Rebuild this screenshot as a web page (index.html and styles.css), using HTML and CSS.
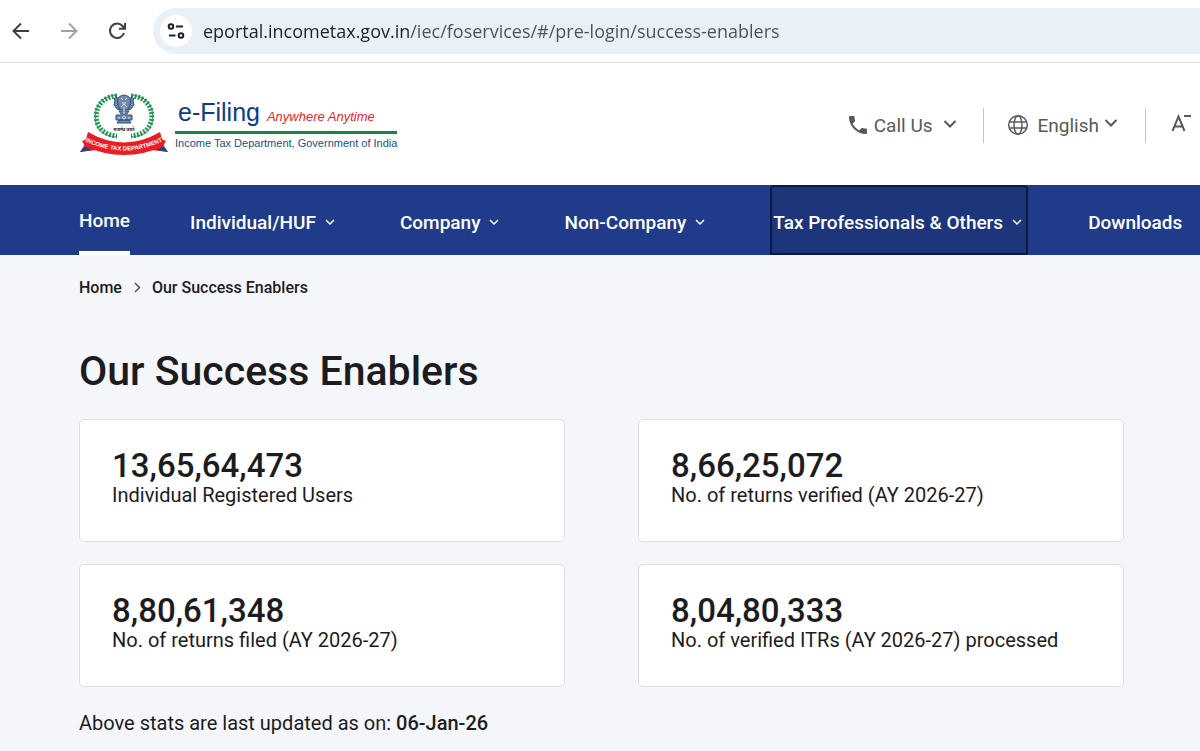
FILE: index.html
```html
<!doctype html>
<html lang="en">
<head>
    <meta charset="utf-8">
    <title>Our Success Enablers</title>
    <link rel="stylesheet" href="styles.css">
</head>
<body>
    <div class="browser-bar">
        <button class="browser-btn" type="button" aria-label="Back">
            <svg width="20" height="20" viewBox="0 0 20 20"><path d="M18 10H3M10 2.500L2.500 10L10 17.500"/></svg>
        </button>
        <button class="browser-btn disabled" type="button" aria-label="Forward" disabled>
            <svg width="20" height="20" viewBox="0 0 20 20"><path d="M2 10H17M10 2.500L17.500 10L10 17.500"/></svg>
        </button>
        <button class="browser-btn" type="button" aria-label="Reload">
            <svg width="20" height="20" viewBox="0 0 20 20"><path d="M17 12A7.200 7.200 0 1 1 15.500 5L17.500 7.200M18 2V7.700H12"/></svg>
        </button>
        <div class="address">
            <button class="site-info" type="button" aria-label="Site information">
                <svg width="20" height="20" viewBox="0 0 20 20"><circle cx="5" cy="5.500" r="2.300"/><path d="M10 5.500H17M3 14.500H9.500"/><circle cx="15" cy="14.500" r="2.300"/></svg>
            </button>
            <input class="url" type="text" aria-label="Address" value="eportal.incometax.gov.in/iec/foservices/#/pre-login/success-enablers">
        </div>
    </div>

    <header class="header">
        <a class="logo" href="#">
            <svg class="emblem" width="90" height="66" viewBox="0 0 90 66" role="img" aria-label="Income Tax Department">
                <!-- laurel -->
                <g fill="none" stroke="#2a9b5c" stroke-width="1">
                    <path d="M38 3C20 4 14 18 17 31C20 41 27 44 38 45M52 3C70 4 76 18 73 31C70 41 63 44 52 45"/>
                </g>
                <g fill="none" stroke="#239454" stroke-width="5" stroke-dasharray="2 1.500">
                    <path d="M38 4C21 5 15 18 18 30C21 39 28 43 38 44M52 4C69 5 75 18 72 30C69 39 62 43 52 44"/>
                </g>
                <!-- lion capital -->
                <g fill="#7089a8" stroke="#2f5180" stroke-width="1">
                    <path d="M40 5Q45 1 50 5L52 9L51 14L49 18H41L39 14L38 9Z"/>
                    <path d="M38 5Q34 5 36 9L35 13L38 17L41 18L39 13ZM52 5Q56 5 54 9L55 13L52 17L49 18L51 13Z"/>
                    <path d="M40 19H50L48 22H42ZM37 23H53V28H37ZM40 28H50L52 31H38Z"/>
                </g>
                <g fill="none" stroke="#dce7f0" stroke-width="1">
                    <path d="M42 6L44 8M48 6L46 8M43 11H47M42 15L45 12L48 15M45 15V22"/>
                    <circle cx="45" cy="25.500" r="1.500"/>
                    <path d="M39 26H41M49 26H51"/>
                </g>
                <text class="motto" x="45" y="39" text-anchor="middle">सत्यमेव जयते</text>
                <!-- ribbon -->
                <path fill="#ed1c24" d="M10 46L3 49L6 54L1 60L17 58ZM80 46L87 49L84 54L89 60L73 58Z"/>
                <path fill="#27467d" d="M5 54L1 60L13 58ZM85 54L89 60L77 58Z"/>
                <path fill="#ed1c24" d="M9 40Q45 61 81 40L85 54Q45 72 5 54Z"/>
                <path id="ribbon-line" fill="none" d="M6 49Q45 68 84 49"/>
                <text class="ribbon-text"><textPath href="#ribbon-line" startOffset="50%" text-anchor="middle">INCOME TAX DEPARTMENT</textPath></text>
            </svg>
            <span class="logo-text">
                <span class="logo-title">e-Filing <em>Anywhere Anytime</em></span>
                <span class="logo-sub">Income Tax Department, Government of India</span>
            </span>
        </a>
        <div class="tools">
            <button class="tool call" type="button">
                <svg width="20" height="20" viewBox="2 2 20 20"><path fill="currentColor" d="M6.620 10.790c1.440 2.830 3.760 5.140 6.590 6.590l2.200-2.200c.270-.270.670-.360 1.020-.240 1.120.370 2.330.570 3.570.570.550 0 1 .450 1 1V20c0 .550-.450 1-1 1-9.390 0-17-7.610-17-17 0-.550.450-1 1-1h3.500c.550 0 1 .450 1 1 0 1.250.200 2.450.570 3.570.110.350.030.740-.250 1.020l-2.200 2.200z"/></svg>
                Call Us
                <svg class="chevron" width="14" height="14" viewBox="0 0 14 14"><path d="M1.500 3L7 8.500L12.500 3"/></svg>
            </button>
            <button class="tool language" type="button">
                <svg class="globe" width="22" height="22" viewBox="0 0 22 22"><circle cx="11" cy="11" r="9.300"/><ellipse cx="11" cy="11" rx="4" ry="9.300"/><path d="M2.500 8H19.500M2.500 14H19.500"/></svg>
                English
                <svg class="chevron" width="14" height="14" viewBox="0 0 14 14"><path d="M1.500 2L7 7.500L12.500 2"/></svg>
            </button>
            <button class="tool font-size" type="button" aria-label="Decrease text size">
                <svg width="22" height="22" viewBox="0 0 22 22"><path d="M2.500 17L8.500 2.500L14.500 17M5 12.500H12M14 2H21"/></svg>
            </button>
        </div>
    </header>

    <nav class="nav">
        <a class="nav-item active" href="#">Home</a>
        <button class="nav-item" type="button">Individual/HUF <svg width="12" height="12" viewBox="0 0 12 12"><path d="M2 4L6 8L10 4"/></svg></button>
        <button class="nav-item" type="button">Company <svg width="12" height="12" viewBox="0 0 12 12"><path d="M2 4L6 8L10 4"/></svg></button>
        <button class="nav-item" type="button">Non-Company <svg width="12" height="12" viewBox="0 0 12 12"><path d="M2 4L6 8L10 4"/></svg></button>
        <button class="nav-item focused" type="button">Tax Professionals &amp; Others <svg width="12" height="12" viewBox="0 0 12 12"><path d="M2 4L6 8L10 4"/></svg></button>
        <a class="nav-item" href="#">Downloads</a>
    </nav>

    <main class="content">
        <div class="breadcrumb">
            <a href="#">Home</a>
            <svg width="8" height="12" viewBox="0 0 8 12"><path d="M2 1L6.500 5.500L2 10"/></svg>
            <span>Our Success Enablers</span>
        </div>
        <h1>Our Success Enablers</h1>
        <div class="stats">
            <div class="card">
                <strong>13,65,64,473</strong>
                <p>Individual Registered Users</p>
            </div>
            <div class="card">
                <strong>8,66,25,072</strong>
                <p>No. of returns verified (AY 2026-27)</p>
            </div>
            <div class="card">
                <strong>8,80,61,348</strong>
                <p>No. of returns filed (AY 2026-27)</p>
            </div>
            <div class="card">
                <strong>8,04,80,333</strong>
                <p>No. of verified ITRs (AY 2026-27) processed</p>
            </div>
        </div>
        <p class="updated">Above stats are last updated as on: <b>06-Jan-26</b></p>
    </main>
</body>
</html>
```
FILE: styles.css
```css
* {
    box-sizing: border-box;
}

html {
    background: #f5f6fa;
}

body {
    margin: 0;
    overflow-x: hidden;
    font-family: Roboto, sans-serif;
    color: #1c1c1e;
}

button {
    padding: 0;
    border: 0;
    background: none;
    font: inherit;
    color: inherit;
    white-space: nowrap;
}

a {
    color: inherit;
    text-decoration: none;
}

svg {
    flex: none;
}

/* browser bar */

.browser-bar {
    display: flex;
    align-items: center;
    gap: 28px;
    height: 63px;
    padding-left: 11px;
    background: white;
    border-bottom: 1px solid #dfe1e5;
}

.browser-btn {
    display: flex;
    color: #3c4043;
}

.browser-btn.disabled {
    color: #a0a2a5;
}

.browser-btn svg,
.site-info svg {
    fill: none;
    stroke: currentColor;
    stroke-width: 2;
}

.address {
    display: flex;
    flex: 1;
    align-items: center;
    gap: 11px;
    height: 46px;
    margin-left: -2px;
    padding-left: 7px;
    border-radius: 23px 0 0 23px;
    background: #e9f0f8;
}

.site-info {
    display: flex;
    align-items: center;
    justify-content: center;
    width: 32px;
    height: 32px;
    border-radius: 50%;
    background: white;
    color: #1f2023;
}

.url {
    flex: 1;
    min-width: 0;
    padding: 0;
    border: 0;
    background: linear-gradient(90deg, #1f2023 206px, #4c5056 206px);
    -webkit-background-clip: text;
    background-clip: text;
    color: transparent;
    font: 18px/26px "Open Sans", sans-serif;
}

/* header */

.header {
    display: flex;
    align-items: center;
    justify-content: space-between;
    height: 122px;
    padding: 2px 8px 0 79px;
    background: white;
}

.logo {
    display: flex;
    align-items: center;
    gap: 6px;
}

.motto {
    font: bold 4px "Noto Sans", sans-serif;
    fill: #222;
}

.ribbon-text {
    font: bold 6px "Liberation Sans", sans-serif;
    fill: white;
}

.logo-text {
    display: flex;
    flex-direction: column;
    font-family: "Liberation Sans", Arial, sans-serif;
    white-space: nowrap;
}

.logo-title {
    border-bottom: 3px solid #16883f;
    padding-left: 3px;
    font-size: 25px;
    line-height: 29px;
    color: #0c3c85;
}

.logo-title em {
    font-size: 13px;
    color: #ee1c25;
}

.logo-sub {
    font-size: 11px;
    line-height: 18px;
    color: #18508a;
}

.tools {
    display: flex;
    align-items: center;
    color: #58595b;
}

.tool {
    display: flex;
    align-items: center;
    height: 35px;
    font-size: 19px;
}

.tool svg {
    fill: none;
    stroke: currentColor;
    stroke-width: 2;
}

.call svg:first-child {
    margin-right: 6px;
    stroke: none;
}

.call .chevron {
    margin: 0 26px 0 10px;
}

.language {
    padding: 0 27px 0 23px;
    border: solid #c4c4c4;
    border-width: 0 1px;
}

.tool .globe {
    margin-right: 9px;
    stroke-width: 1.500;
}

.language .chevron {
    margin-left: 5px;
}

.font-size {
    padding-left: 24px;
}

/* main menu */

.nav {
    display: flex;
    gap: 60px;
    height: 70px;
    padding-left: 79px;
    background: #1f3b8a;
    color: white;
    font-size: 19px;
    font-weight: 500;
}

.nav-item {
    display: flex;
    flex: none;
    align-items: center;
    gap: 8px;
    padding: 4px 4px 0 0;
}

.nav-item svg {
    fill: none;
    stroke: currentColor;
    stroke-width: 1.500;
}

.nav-item.active {
    padding-right: 0;
    border-bottom: 4px solid white;
}

.nav-item.focused {
    padding: 4px 3px 0 1px;
    border: 2px solid #0a1a45;
    border-radius: 4px 4px 0 0;
    background: #1d357b;
}

/* page */

.content {
    padding: 22px 76px 16px 79px;
}

.breadcrumb {
    display: flex;
    align-items: center;
    gap: 11px;
    font-size: 16px;
    font-weight: 500;
    line-height: 22px;
}

.breadcrumb svg {
    fill: none;
    stroke: #55575b;
    stroke-width: 1.500;
}

h1 {
    margin: 48px 0 24px;
    font-size: 41px;
    font-weight: 500;
    line-height: 48px;
}

.stats {
    display: grid;
    grid-template-columns: 1fr 1fr;
    gap: 22px 73px;
}

.card {
    padding: 28px 32px 34px;
    border: 1px solid #dddee5;
    border-radius: 5px;
    background: white;
}

.card strong {
    display: block;
    font-size: 33px;
    font-weight: 500;
    line-height: 36px;
}

.card p {
    margin: 0;
    font-size: 20px;
    line-height: 23px;
}

.updated {
    margin: 24px 0 0;
    font-size: 20px;
    line-height: 24px;
}

.updated b {
    font-weight: 500;
}
```
